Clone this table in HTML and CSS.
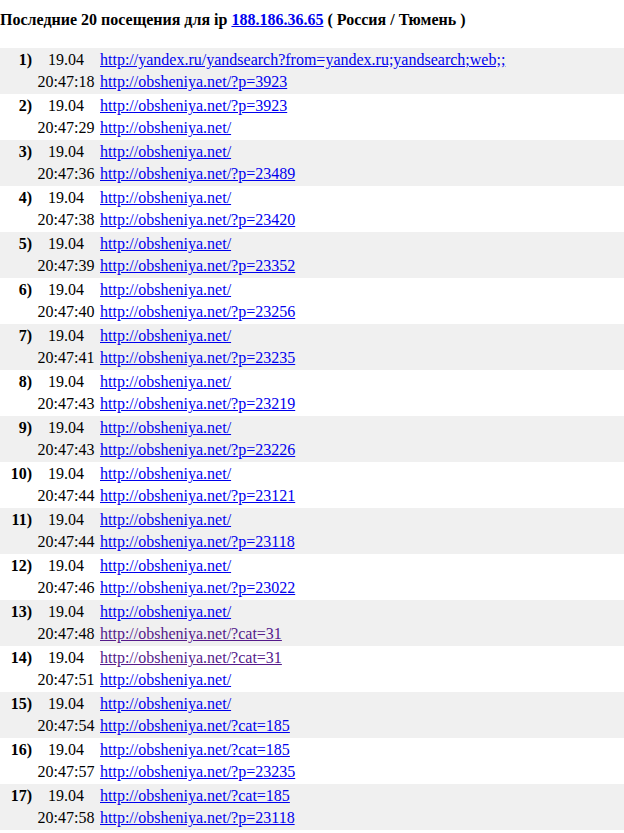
FILE: index.html
```html
<!DOCTYPE html>
<html lang="ru">

<head>
  <meta charset="UTF-8" />
  <title>Последние 20 посещения</title>
  <link rel="stylesheet" href="styles.css">
</head>

<body>
  <div class="title">
    Последние 20 посещения для ip <a href="#">188.186.36.65</a> ( Россия / Тюмень )
  </div>

  <div class="visits">
    <div class="visit">
      <span class="num">1)</span>
      <span class="when">19.04<br>20:47:18</span>
      <span class="urls"><a href="#">http://yandex.ru/yandsearch?from=yandex.ru;yandsearch;web;;</a><br><a href="#">http://obsheniya.net/?p=3923</a></span>
    </div>
    <div class="visit">
      <span class="num">2)</span>
      <span class="when">19.04<br>20:47:29</span>
      <span class="urls"><a href="#">http://obsheniya.net/?p=3923</a><br><a href="#">http://obsheniya.net/</a></span>
    </div>
    <div class="visit">
      <span class="num">3)</span>
      <span class="when">19.04<br>20:47:36</span>
      <span class="urls"><a href="#">http://obsheniya.net/</a><br><a href="#">http://obsheniya.net/?p=23489</a></span>
    </div>
    <div class="visit">
      <span class="num">4)</span>
      <span class="when">19.04<br>20:47:38</span>
      <span class="urls"><a href="#">http://obsheniya.net/</a><br><a href="#">http://obsheniya.net/?p=23420</a></span>
    </div>
    <div class="visit">
      <span class="num">5)</span>
      <span class="when">19.04<br>20:47:39</span>
      <span class="urls"><a href="#">http://obsheniya.net/</a><br><a href="#">http://obsheniya.net/?p=23352</a></span>
    </div>
    <div class="visit">
      <span class="num">6)</span>
      <span class="when">19.04<br>20:47:40</span>
      <span class="urls"><a href="#">http://obsheniya.net/</a><br><a href="#">http://obsheniya.net/?p=23256</a></span>
    </div>
    <div class="visit">
      <span class="num">7)</span>
      <span class="when">19.04<br>20:47:41</span>
      <span class="urls"><a href="#">http://obsheniya.net/</a><br><a href="#">http://obsheniya.net/?p=23235</a></span>
    </div>
    <div class="visit">
      <span class="num">8)</span>
      <span class="when">19.04<br>20:47:43</span>
      <span class="urls"><a href="#">http://obsheniya.net/</a><br><a href="#">http://obsheniya.net/?p=23219</a></span>
    </div>
    <div class="visit">
      <span class="num">9)</span>
      <span class="when">19.04<br>20:47:43</span>
      <span class="urls"><a href="#">http://obsheniya.net/</a><br><a href="#">http://obsheniya.net/?p=23226</a></span>
    </div>
    <div class="visit">
      <span class="num">10)</span>
      <span class="when">19.04<br>20:47:44</span>
      <span class="urls"><a href="#">http://obsheniya.net/</a><br><a href="#">http://obsheniya.net/?p=23121</a></span>
    </div>
    <div class="visit">
      <span class="num">11)</span>
      <span class="when">19.04<br>20:47:44</span>
      <span class="urls"><a href="#">http://obsheniya.net/</a><br><a href="#">http://obsheniya.net/?p=23118</a></span>
    </div>
    <div class="visit">
      <span class="num">12)</span>
      <span class="when">19.04<br>20:47:46</span>
      <span class="urls"><a href="#">http://obsheniya.net/</a><br><a href="#">http://obsheniya.net/?p=23022</a></span>
    </div>
    <div class="visit">
      <span class="num">13)</span>
      <span class="when">19.04<br>20:47:48</span>
      <span class="urls"><a href="#">http://obsheniya.net/</a><br><a class="visited" href="#">http://obsheniya.net/?cat=31</a></span>
    </div>
    <div class="visit">
      <span class="num">14)</span>
      <span class="when">19.04<br>20:47:51</span>
      <span class="urls"><a class="visited" href="#">http://obsheniya.net/?cat=31</a><br><a href="#">http://obsheniya.net/</a></span>
    </div>
    <div class="visit">
      <span class="num">15)</span>
      <span class="when">19.04<br>20:47:54</span>
      <span class="urls"><a href="#">http://obsheniya.net/</a><br><a href="#">http://obsheniya.net/?cat=185</a></span>
    </div>
    <div class="visit">
      <span class="num">16)</span>
      <span class="when">19.04<br>20:47:57</span>
      <span class="urls"><a href="#">http://obsheniya.net/?cat=185</a><br><a href="#">http://obsheniya.net/?p=23235</a></span>
    </div>
    <div class="visit">
      <span class="num">17)</span>
      <span class="when">19.04<br>20:47:58</span>
      <span class="urls"><a href="#">http://obsheniya.net/?cat=185</a><br><a href="#">http://obsheniya.net/?p=23118</a></span>
    </div>
  </div>
</body>

</html>
```

FILE: styles.css
```css
/* plain old-school stats page */

body {
  margin: 0;
  background-color: #ffffff;
  color: #000000;
  font-family: 'Liberation Serif', 'Times New Roman', serif;
  font-size: 16px;
}

a {
  color: #0000ee;
  text-decoration: underline;
}

a.visited {
  color: #551a8b;
}

.title {
  font-weight: bold;
  line-height: 22px;
  padding-top: 9px;
  margin-bottom: 17px;
}

.visit {
  display: grid;
  grid-template-columns: 32px 58px 1fr;
  column-gap: 5px;
  padding: 1px 0;
  line-height: 22px;
}

.visit:nth-child(odd) {
  background-color: #f0f0f0;
}

.num {
  font-weight: bold;
  text-align: right;
}

.when {
  text-align: center;
  white-space: nowrap;
}

.urls {
  white-space: nowrap;
}
```
